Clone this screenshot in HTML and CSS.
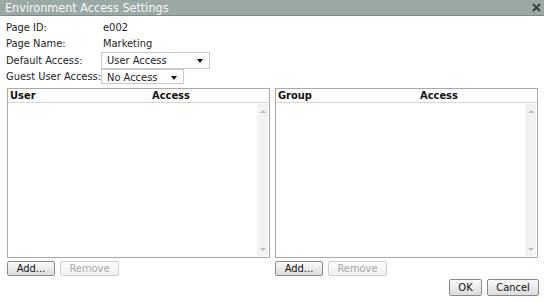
FILE: index.html
```html
<!DOCTYPE html>
<html>
<head>
<meta charset="utf-8">
<title>Environment Access Settings</title>
<link rel="stylesheet" href="styles.css">
</head>
<body>
<div class="dialog">
  <div class="titlebar">
    <span class="title">Environment Access Settings</span>
    <svg class="close" width="9" height="9" viewBox="0 0 9 9"><path d="M1 1L8 8M8 1L1 8" stroke="#3a4140" stroke-width="2"/></svg>
  </div>

  <div class="fields">
    <label>Page ID:</label>
    <span class="val">e002</span>
    <label>Page Name:</label>
    <span class="val">Marketing</span>
    <label>Default Access:</label>
    <div class="select wide">User Access<i class="caret"></i></div>
    <label>Guest User Access:</label>
    <div class="select">No Access<i class="caret"></i></div>
  </div>

  <div class="lists">
    <div class="pane">
      <div class="grid">
        <div class="grid-head"><span class="c1">User</span><span>Access</span></div>
        <div class="grid-body">
          <div class="rows"></div>
          <div class="scroll"><i class="up"></i><i class="down"></i></div>
        </div>
      </div>
      <div class="btns">
        <button class="btn">Add...</button>
        <button class="btn" disabled>Remove</button>
      </div>
    </div>
    <div class="pane">
      <div class="grid">
        <div class="grid-head"><span class="c1">Group</span><span>Access</span></div>
        <div class="grid-body">
          <div class="rows"></div>
          <div class="scroll"><i class="up"></i><i class="down"></i></div>
        </div>
      </div>
      <div class="btns">
        <button class="btn">Add...</button>
        <button class="btn" disabled>Remove</button>
      </div>
    </div>
  </div>

  <div class="footer">
    <button class="btn ok">OK</button>
    <button class="btn cancel">Cancel</button>
  </div>
</div>
</body>
</html>
```

FILE: styles.css
```css
/* dialog frame */
html, body {margin: 0; padding: 0; background: #fff;}
body {font-family: "DejaVu Sans Condensed", "DejaVu Sans", sans-serif; font-size: 11px; color: #222;}
.dialog {width: 544px; height: 302px; display: flex; flex-direction: column; background: #fff;}

.titlebar {height: 15px; display: flex; align-items: center; justify-content: space-between; padding: 0 3px 0 5px; background: #9aa9a6; border-bottom: 1px solid #7d8b88;}
.titlebar .title {font-size: 12.5px; color: #f4f7f6; line-height: 15px;}
.titlebar .close {display: block;}

/* top fields */
.fields {display: grid; grid-template-columns: 95px auto; grid-auto-rows: 16.5px; align-items: center; justify-items: start; padding: 3px 0 0 6px;}
.fields label {color: #222; white-space: nowrap;}
.fields .val {padding-left: 2px;}
.select {position: relative; height: 15px; line-height: 15px; padding: 0 0 0 5px; border: 1px solid #c9c9c9; background: #fff; box-sizing: border-box; width: 83px; white-space: nowrap;}
.select.wide {width: 109px; height: 17px; line-height: 15px;}
.select .caret {position: absolute; right: 6px; top: 6px; width: 0; height: 0; border-left: 3px solid transparent; border-right: 3px solid transparent; border-top: 4px solid #111;}

/* two list panes */
.lists {display: flex; gap: 5px; padding: 3px 6px 0 7px;}
.pane {flex: 1;}
.grid {height: 170px; border: 1px solid #a9a9a9; box-sizing: border-box; display: flex; flex-direction: column;}
.grid-head {height: 13px; line-height: 13px; border-bottom: 1px solid #d6d6d6; font-weight: bold; color: #111; display: flex; padding-left: 2px;}
.grid-head .c1 {width: 142px;}
.grid-body {flex: 1; display: flex;}
.grid-body .rows {flex: 1;}
.scroll {width: 11px; margin: 1px 1px 1px 0; background: #f2f2f2; position: relative;}
.scroll i {position: absolute; left: 3px; width: 0; height: 0; border-left: 3px solid transparent; border-right: 3px solid transparent;}
.scroll .up {top: 6px; border-bottom: 3px solid #bdbdbd;}
.scroll .down {bottom: 5px; border-top: 3px solid #bdbdbd;}

/* buttons */
.btns {display: flex; gap: 5px; margin-top: 3px;}
.btn {font-family: inherit; font-size: 11px; height: 15px; line-height: 13px; padding: 0 6px; margin: 0; border: 1px solid #8a8a8a; border-radius: 2px; background: linear-gradient(#fafafa, #dcdcdc); color: #111;}
.btns .btn {width: 48px;}
.btns .btn:disabled {width: 59px; color: #a8a8a8; border-color: #cfcfcf; background: linear-gradient(#fdfdfd, #f0f0f0);}

.footer {display: flex; justify-content: flex-end; gap: 5px; padding: 3px 5px 0 0;}
.footer .btn {height: 17px;}
.footer .ok {width: 33px;}
.footer .cancel {width: 52px;}
```
